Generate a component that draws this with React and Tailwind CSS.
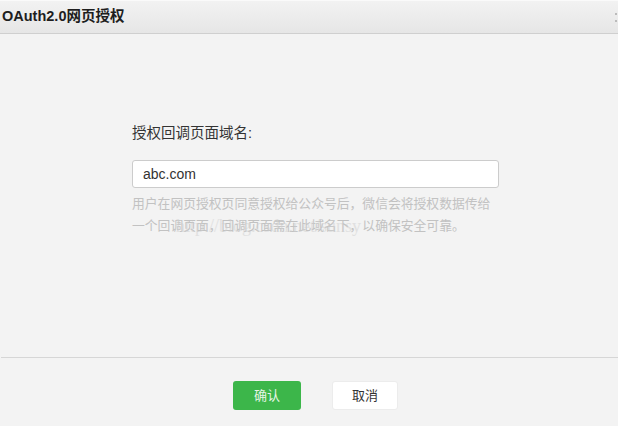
export default function App() {
  return (
    <div
      className="w-[618px] h-[426px] flex flex-col bg-[#f3f3f3] overflow-hidden"
      style={{ fontFamily: '"Liberation Sans", "Noto Sans CJK SC", sans-serif' }}
    >
      <div className="h-[34px] flex items-center justify-between border-t border-t-[#fafafa] border-b border-b-[#cfcfcf] bg-gradient-to-b from-[#f2f2f2] to-[#e6e6e6]">
        <span className="pl-[2px] text-[14.5px] font-bold text-[#1e1e1e]">OAuth2.0网页授权</span>
        <span className="flex flex-col gap-[5px] pr-[1px]">
          <span className="w-[2px] h-[2px] bg-[#bbb]"></span>
          <span className="w-[2px] h-[2px] bg-[#bbb]"></span>
        </span>
      </div>

      <div className="flex-1 flex flex-col pl-[132px] pt-[90px]">
        <div className="text-[14.5px] text-[#333] leading-[18px]">授权回调页面域名:</div>
        <div className="mt-[18px] w-[367px] h-[28px] bg-white border border-[#cccccc] rounded-[3px] flex items-center pl-[10px] text-[14px] text-[#333]">
          abc.com
        </div>
        <div className="relative mt-[5px] w-[370px] text-[12.8px] leading-[22px] text-[#c2c2c2]">
          <div>用户在网页授权页同意授权给公众号后，微信会将授权数据传给</div>
          <div>一个回调页面，回调页面需在此域名下，以确保安全可靠。</div>
          <span
            className="absolute left-[44px] top-[22px] text-[18px] leading-[22px] text-[#cfcfcf] opacity-50 pointer-events-none"
            style={{ fontFamily: '"Liberation Serif", serif' }}
          >
            http://blog.csdn.net/sunsy
          </span>
        </div>
      </div>

      <div className="h-px ml-px bg-[#d6d6d6]"></div>
      <div className="h-[68px] flex items-start pl-[233px] pt-[23px] gap-[31px]">
        <button className="w-[68px] h-[29px] rounded-[3px] bg-[#3cb64a] text-[13px] text-[#e6f5e6]">
          确认
        </button>
        <button className="w-[66px] h-[29px] rounded-[3px] bg-white border border-[#ececec] text-[13px] text-[#333]">
          取消
        </button>
      </div>
    </div>
  );
}
